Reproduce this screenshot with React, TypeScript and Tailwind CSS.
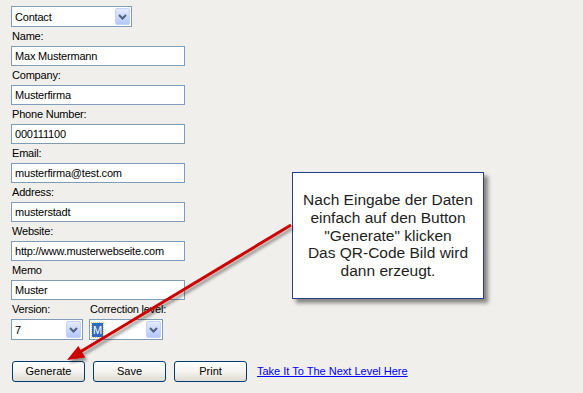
const fields = [
  { label: "Name:", value: "Max Mustermann" },
  { label: "Company:", value: "Musterfirma" },
  { label: "Phone Number:", value: "000111100" },
  { label: "Email:", value: "musterfirma@test.com" },
  { label: "Address:", value: "musterstadt" },
  { label: "Website:", value: "http://www.musterwebseite.com" },
  { label: "Memo", value: "Muster" },
];

const Chevron = () => (
  <svg width="9" height="6" viewBox="0 0 9 6">
    <path d="M1 1 L4.5 4.5 L8 1" fill="none" stroke="#4d6185" strokeWidth="2" />
  </svg>
);

const Combo = ({ value, className, selected }: { value: string; className: string; selected?: boolean }) => (
  <div className={`flex h-[21px] items-center justify-between border border-[#7f9db9] bg-white pl-[2px] pr-[1px] ${className}`}>
    {selected ? (
      <span className="bg-[#316ac5] px-[1px] leading-[14px] text-white outline outline-1 outline-dotted outline-[#f5c76d]">{value}</span>
    ) : (
      <span className="pl-[1px] leading-[14px]">{value}</span>
    )}
    <span className="flex h-[17px] w-[15px] items-center justify-center rounded-[2px] border border-[#c3d3fd] bg-gradient-to-b from-[#e3ebfe] to-[#b4c8f6]">
      <Chevron />
    </span>
  </div>
);

const Button = ({ children }: { children: string }) => (
  <button className="h-[21px] w-[73px] rounded-[3px] border border-[#003c74] bg-gradient-to-b from-[#ffffff] via-[#f4f3ee] to-[#dedbd0] text-[11px] leading-[19px] text-black">
    {children}
  </button>
);

export default function App() {
  return (
    <div className="relative h-[393px] w-[583px] overflow-hidden bg-[#f1efeb] font-['Liberation_Sans',Arial,sans-serif] text-[11px] text-black">
      <div className="flex flex-col pl-[11px] pt-[6px] tracking-[-0.2px]">
        <Combo value="Contact" className="w-[121px]" />
        {fields.map((f) => (
          <div key={f.label} className="flex flex-col">
            <div className="h-[19px] pl-[1px] pt-[3px] leading-[13px]">{f.label}</div>
            <div className="flex h-[20px] w-[174px] items-center border border-[#7f9db9] bg-white px-[3px] leading-[14px]">
              {f.value}
            </div>
          </div>
        ))}
        <div className="flex gap-[6px]">
          <div className="flex flex-col">
            <div className="h-[19px] pl-[1px] pt-[3px] leading-[13px]">Version:</div>
            <Combo value="7" className="w-[72px]" />
          </div>
          <div className="flex flex-col">
            <div className="h-[19px] pl-[1px] pt-[3px] leading-[13px]">Correction level:</div>
            <Combo value="M" className="w-[74px]" selected />
          </div>
        </div>
        <div className="mt-[21px] flex items-center gap-[8px] pl-[1px] tracking-normal">
          <Button>Generate</Button>
          <Button>Save</Button>
          <Button>Print</Button>
          <a href="#" className="ml-[2px] text-[#0000ff] underline">
            Take It To The Next Level Here
          </a>
        </div>
      </div>

      <div className="absolute left-[292px] top-[172px] flex h-[127px] w-[192px] items-center justify-center border border-[#24408e] bg-white text-center text-[15.5px] leading-[17.7px] text-[#1e1e1e] shadow-[4px_4px_4px_rgba(0,0,0,0.45)]">
        <p>
          Nach Eingabe der Daten
          <br />
          einfach auf den Button
          <br />
          "Generate" klicken
          <br />
          Das QR-Code Bild wird
          <br />
          dann erzeugt.
        </p>
      </div>

      <svg className="pointer-events-none absolute inset-0" width="583" height="393" viewBox="0 0 583 393">
        <defs>
          <filter id="sh" x="-10%" y="-10%" width="130%" height="130%">
            <feDropShadow dx="2" dy="3" stdDeviation="1.5" floodColor="#000" floodOpacity="0.4" />
          </filter>
        </defs>
        <g filter="url(#sh)">
          <line x1="291" y1="225" x2="80" y2="352" stroke="#cc0000" strokeWidth="3" />
          <polygon points="67,360 78.3,346 85.3,357.5" fill="#cc0000" />
        </g>
      </svg>
    </div>
  );
}
